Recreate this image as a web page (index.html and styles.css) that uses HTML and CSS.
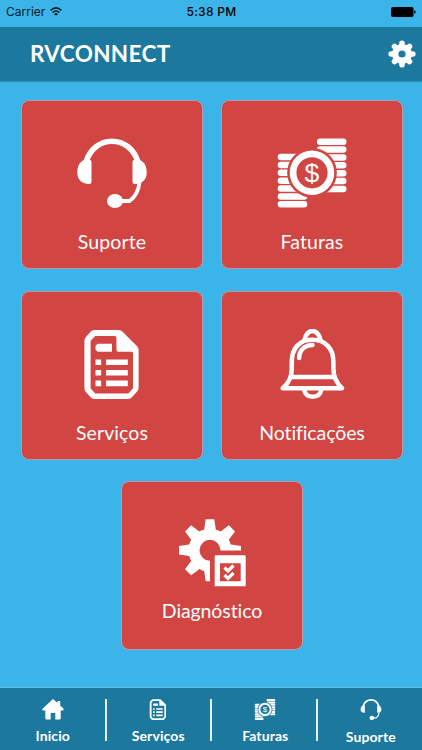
FILE: index.html
```html
<!DOCTYPE html>
<html lang="pt">
<head>
<meta charset="utf-8">
<meta name="viewport" content="width=device-width, initial-scale=1">
<title>RVCONNECT</title>
<link rel="stylesheet" href="styles.css">
</head>
<body>
<svg class="sprite" aria-hidden="true">
  <symbol id="headset" viewBox="0 0 70 70">
    <path class="line" stroke-width="5.600" d="M9 24C13 11 23 3.200 35 3.200S57 11 61 24"/>
    <path d="M6 22.500Q9 21 12.500 21.500Q14.500 22 14.500 24V43.500Q14.500 46 12 46Q.3 45.500.3 34Q.3 26 6 22.500Z"/>
    <path d="M64 22.500Q61 21 57.500 21.500Q55.500 22 55.500 24V43.500Q55.500 46 58 46Q69.700 45.500 69.700 34Q69.700 26 64 22.500Z"/>
    <path class="line" stroke-width="3.800" d="M62.500 44C61.500 54 57 60 52.500 63H44"/>
    <ellipse cx="38" cy="63" rx="8" ry="7"/>
  </symbol>
  <symbol id="coins" viewBox="0 0 70 71">
    <g class="line" stroke-width="6.600" stroke-linecap="round">
      <path d="M43.300 3.700H66.700M43.300 11.700H66.700M43.300 19.700H66.700M43.300 27.700H66.700M43.300 35.700H66.700M43.300 43.700H66.700M43.300 51.700H66.700"/>
      <path d="M3.500 19.300H27M3.500 27.300H27M3.500 35.300H27M3.500 43.300H27M3.500 51.300H27M3.500 59.300H27M3.500 67.300H27"/>
    </g>
    <circle class="gap" cx="35" cy="35.300" r="25.200"/>
    <circle class="line" cx="35" cy="35.300" r="19.200" stroke-width="6.800"/>
    <text x="35" y="44.800" text-anchor="middle">$</text>
  </symbol>
  <symbol id="doc" viewBox="0 0 70 71">
    <path fill-rule="evenodd" d="M17 1H42Q44 1 46 3L60 17Q62 19 62 21V60Q62 62 60 64L55.500 69Q53.500 71 51 71H17Q15 71 13 69L9 64.500Q7 62.500 7 60V12Q7 10 8.500 8L13 3Q15 1 17 1ZM18 7L13.300 12V60L18 65.300H51.500L56.300 60V24.500Q56.300 23 54.500 23H41.500Q39.500 23 39.500 21V9Q39.500 7 37.500 7Z"/>
    <path d="M20.500 15H35V23H20.500L18.300 21V17ZM18.300 31H24V36.600H18.300ZM29 31H51V36.600H29ZM18.300 41.600H24V47.200H18.300ZM29 41.600H51V47.200H29ZM18.300 52.300H24V58H18.300ZM29 52.300H51V58H29Z"/>
  </symbol>
  <symbol id="bell" viewBox="0 0 70 71">
    <g class="line" stroke-width="4.600" stroke-linecap="round" stroke-linejoin="round">
      <path d="M5.300 60C12.500 54 14.500 48 14.500 40V33C14.500 20 22 11 35.300 11S56.700 20 56.700 33V40C56.700 48 59 54 65.500 60Z"/>
      <path d="M14 48.700H57"/>
      <path d="M27.500 10.500C29 5 31 2 35.300 2S42 5 43.500 10.500"/>
      <path d="M27 61.500C28 66.500 31 68.700 35.700 68.700S43.500 66.500 44.500 61.500"/>
      <path d="M22 29.500C22 21.500 27.500 16.500 35.500 16.300"/>
    </g>
  </symbol>
  <symbol id="diagnostic" viewBox="0 0 70 70">
    <circle class="line" cx="33" cy="31.300" r="16" stroke-width="11"/>
    <path id="tooth" d="M28.700.300H37.300L39 12H27Z"/>
    <use href="#tooth" transform="rotate(45 33 31.300)"/>
    <use href="#tooth" transform="rotate(90 33 31.300)"/>
    <use href="#tooth" transform="rotate(180 33 31.300)"/>
    <use href="#tooth" transform="rotate(225 33 31.300)"/>
    <use href="#tooth" transform="rotate(270 33 31.300)"/>
    <use href="#tooth" transform="rotate(315 33 31.300)"/>
    <path class="gap" d="M33 31.500H70V70H33Z"/>
    <path fill-rule="evenodd" d="M39 36.300H67.400Q68.700 36.300 68.700 37.600V67.300H37.700V37.600Q37.700 36.300 39 36.300ZM43 44.300V62.300H63.700V44.300Z"/>
    <path class="line" stroke-width="3.200" d="M47.500 48.500L51 52L56.500 46.500M47.500 56L51 59.500L56.500 54"/>
  </symbol>
  <symbol id="home" viewBox="0 0 22 21">
    <path d="M11 0L15.500 4V2H18.200V6.500L22 10.200L21 11.500H18.700V19.500Q18.700 20.600 17.600 20.600H13.300V14H8.700V20.600H4.400Q3.300 20.600 3.300 19.500V11.500H1L0 10.200Z"/>
  </symbol>
  <symbol id="cog" viewBox="0 0 28 28">
    <circle class="line" cx="14" cy="14" r="6.800" stroke-width="6.400"/>
    <g class="line" stroke-width="5.600" stroke-linecap="round">
      <path d="M14 5V3.200M14 23V24.800M5 14H3.200M23 14H24.800M7.600 7.600L6.500 6.500M20.400 7.600L21.500 6.500M7.600 20.400L6.500 21.500M20.400 20.400L21.500 21.500"/>
    </g>
  </symbol>
</svg>

<div class="status">
  <div class="carrier">Carrier
    <svg class="wifi" viewBox="0 0 12 9"><path class="line" stroke-width="1.500" d="M.7 3.400Q6-1.600 11.300 3.400M2.700 5.500Q6 2.500 9.300 5.500"/><path d="M6 8.800L4 6.900Q6 5.300 8 6.900Z"/></svg>
  </div>
  <div class="clock">5:38 PM</div>
  <div class="power"><svg class="battery" viewBox="0 0 25 10"><rect width="22.500" height="10" rx="1.800"/><path d="M23.300 3.300Q24.700 3.500 24.700 5T23.300 6.700Z"/></svg></div>
</div>

<header class="header">
  <h1 class="title">RVCONNECT</h1>
  <svg class="cog"><use href="#cog"/></svg>
</header>

<main class="grid">
  <a class="card"><svg class="icon"><use href="#headset"/></svg><span class="label">Suporte</span></a>
  <a class="card"><svg class="icon"><use href="#coins"/></svg><span class="label">Faturas</span></a>
  <a class="card"><svg class="icon"><use href="#doc"/></svg><span class="label">Serviços</span></a>
  <a class="card"><svg class="icon"><use href="#bell"/></svg><span class="label tight">Notificações</span></a>
  <a class="card compact"><svg class="icon"><use href="#diagnostic"/></svg><span class="label tight">Diagnóstico</span></a>
</main>

<nav class="tabs">
  <a class="tab"><svg class="tab-icon"><use href="#home"/></svg><span class="tab-label">Inicio</span></a>
  <a class="tab"><svg class="tab-icon"><use href="#doc"/></svg><span class="tab-label">Serviços</span></a>
  <a class="tab shifted"><svg class="tab-icon"><use href="#coins"/></svg><span class="tab-label">Faturas</span></a>
  <a class="tab shifted last"><svg class="tab-icon"><use href="#headset"/></svg><span class="tab-label">Suporte</span></a>
</nav>
</body>
</html>
```
FILE: styles.css
```css
* { box-sizing: border-box; }

body {
  --bar: #1c789c;
  --card: #d14543;
  margin: 0;
  height: 750px;
  display: flex;
  flex-direction: column;
  overflow: hidden;
  background: #3ab4e9;
  color: #fff;
  font-family: Lato, "Open Sans", sans-serif;
  font-variant-ligatures: none;
}

.sprite { display: none; }
svg { display: block; fill: currentColor; }
.line { fill: none; stroke: currentColor; }
.gap { fill: var(--surface); }
symbol text { font: 400 27px "Liberation Sans", sans-serif; }

.status {
  height: 27px;
  padding: 0 6px 4px;
  display: grid;
  grid-template-columns: 1fr auto 1fr;
  align-items: center;
  color: #071a24;
  font: 12px/23px Inter, sans-serif;
}
.carrier { display: flex; align-items: center; gap: 5px; }
.wifi { width: 12px; height: 9px; }
.clock { padding-left: 1px; font-weight: 500; letter-spacing: 0.3px; color: #000; }
.power { display: flex; justify-content: flex-end; color: #000; }
.battery { width: 25px; height: 10px; }

.header {
  --surface: var(--bar);
  height: 54px;
  padding: 0 6px 0 30px;
  display: flex;
  align-items: center;
  justify-content: space-between;
  background: var(--bar);
  box-shadow: 0 1px 1px #2b8fb9;
}
.title { margin: 0; font-size: 22.500px; line-height: 54px; font-weight: 700; letter-spacing: 0.35px; }
.cog { width: 28px; height: 28px; }

.grid {
  flex: 1;
  padding: 19px 19px 0 21px;
  display: flex;
  flex-wrap: wrap;
  justify-content: center;
  align-content: flex-start;
  gap: 21.500px 18px;
}
.card {
  --surface: var(--card);
  width: 182px;
  height: 169px;
  padding-top: 37px;
  display: flex;
  flex-direction: column;
  align-items: center;
  gap: 22px;
  background: var(--card);
  border: 1px solid #bd9bad;
  border-radius: 8px;
}
.icon { width: 70px; height: 70px; }
.label { font-size: 19.500px; line-height: 24px; white-space: nowrap; letter-spacing: 0.1px; }
.label.tight { letter-spacing: -0.1px; }
.compact { gap: 10px; }

.tabs {
  --surface: var(--bar);
  height: 63px;
  display: grid;
  grid-template-columns: repeat(4, 1fr);
  background: var(--bar);
  border-top: 1px solid #63bfe2;
}
.tab {
  position: relative;
  padding-top: 11px;
  display: flex;
  flex-direction: column;
  align-items: center;
  gap: 7px;
}
.tab.shifted { padding-left: 3px; }
.tab.last { gap: 8px; }
.tab + .tab::before {
  content: "";
  position: absolute;
  left: -1px;
  top: 11px;
  width: 2px;
  height: 42px;
  background: #e4f3f8;
}
.tab-icon { width: 22px; height: 21px; }
.tab-label { font-size: 14px; line-height: 18px; font-weight: 700; letter-spacing: 0.1px; }
```
